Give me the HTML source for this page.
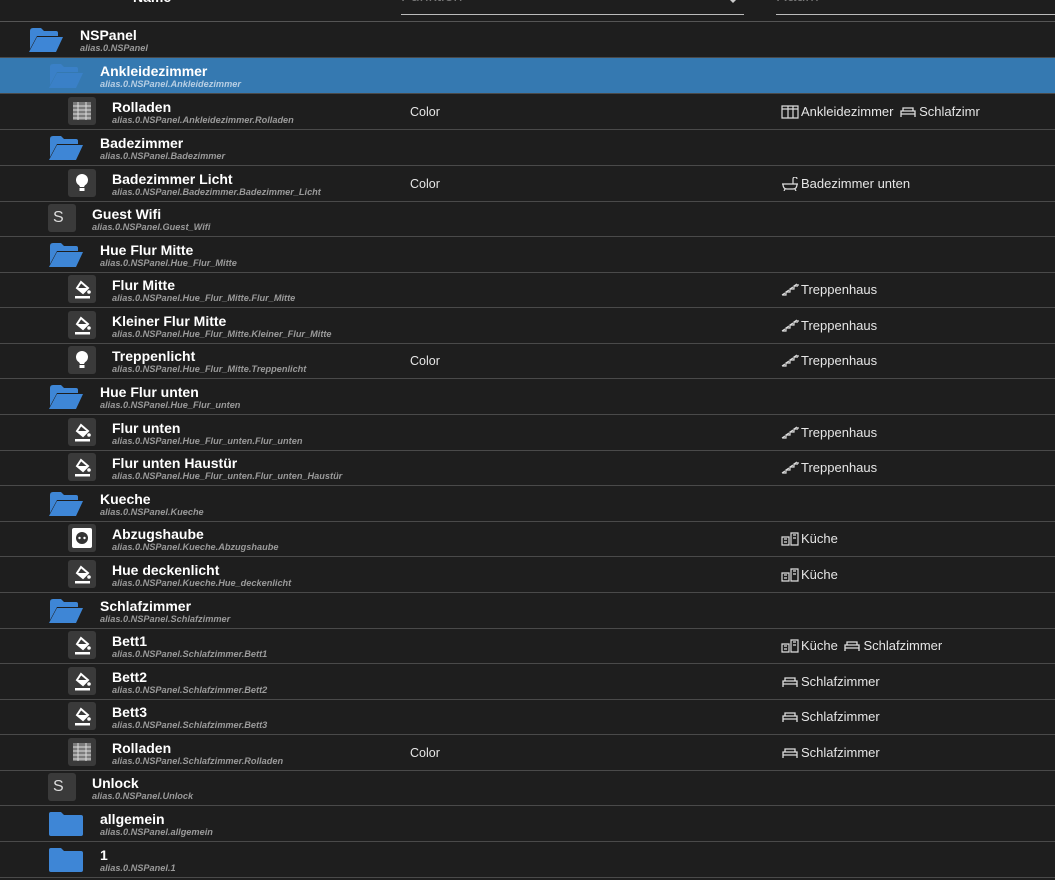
<!DOCTYPE html>
<html><head><meta charset="utf-8">
<style>
html,body{margin:0;padding:0;background:#1e1e1e;width:1055px;height:880px;overflow:hidden;font-family:"Liberation Sans",sans-serif;color:#fff}
.r{position:absolute;left:0;width:1055px;height:35px;border-bottom:1px solid #4a4a4a;box-sizing:content-box}
.sel{background:#3579b1}
.n{position:absolute;top:5px;font-size:14px;font-weight:bold;line-height:16px;white-space:nowrap}
.s{position:absolute;top:21px;font-size:9.2px;font-style:italic;font-weight:bold;color:#9a9a9a;line-height:11px;white-space:nowrap}
.sel .s{color:#b8cfe4}
.ib{position:absolute;top:3px;width:28px;height:28px;background:#3a3a3a;border-radius:3px}
.f{position:absolute;top:5px}
.c{position:absolute;left:410px;top:11px;font-size:12.5px;color:#e6e6e6}
.rm{position:absolute;left:781px;top:10px;font-size:13px;color:#e6e6e6;white-space:nowrap;display:flex;align-items:center;gap:2px}
.rm svg{vertical-align:middle}
.S{font-size:16px;color:#ddd;position:absolute;left:5px;top:5px;font-weight:normal}
</style></head><body>
<svg width="0" height="0" style="position:absolute">
<defs>
<symbol id="fo" viewBox="0 0 36 26"><path d="M2 4 Q2 1 5 1 H13 L16 4 H28 Q30 4 30 6 V9 H9 L2 22 Z" fill="#3e86d6"/><path d="M9 10 H35 L28 25 H1 Z" fill="#3e86d6"/></symbol>
<symbol id="fc" viewBox="0 0 36 26"><path d="M1 3 Q1 1 3 1 H13 L16 4 H33 Q35 4 35 6 V23 Q35 25 33 25 H3 Q1 25 1 23 Z" fill="#3e86d6"/></symbol>
<symbol id="pb" viewBox="0 0 28 28"><path d="M13 7 L20 13 L15 18 L9 13 Z" fill="none" stroke="#fff" stroke-width="2"/><path d="M9 13 L15 18 L20 13 Z" fill="#fff"/><circle cx="21" cy="17" r="1.8" fill="#fff"/><rect x="7" y="21" width="15" height="2.5" fill="#fff"/></symbol>
<symbol id="bl" viewBox="0 0 28 28"><circle cx="14" cy="11" r="6" fill="#fff"/><path d="M10 14 H18 L16 18 H12 Z" fill="#fff"/><rect x="11.5" y="19" width="5" height="3" fill="#fff"/></symbol>
<symbol id="sh" viewBox="0 0 28 28"><rect x="5" y="5" width="18" height="18" fill="#bbb" opacity=".5"/><path d="M5 9H23M5 13H23M5 17H23M5 21H23M10 5V23M18 5V23" stroke="#ddd" stroke-width="1"/></symbol>
<symbol id="so" viewBox="0 0 28 28"><rect x="4" y="4" width="20" height="20" rx="2" fill="#fff"/><circle cx="14" cy="14" r="6" fill="#333"/><circle cx="11.5" cy="14" r="1.2" fill="#fff"/><circle cx="16.5" cy="14" r="1.2" fill="#fff"/></symbol>
<symbol id="st" viewBox="0 0 18 14"><path d="M1 12 H5 V9 H9 V6 H13 V3 H17 M1 12 L4 10 M5 9 L8 7 M9 6 L12 4 M13 3 L16 1 M17 1 V3" fill="none" stroke="#ddd" stroke-width="1.2"/></symbol>
<symbol id="bd" viewBox="0 0 18 14"><path d="M2 12 V6 H16 V12 M2 9 H16 M4 6 V3 H14 V6" fill="none" stroke="#ddd" stroke-width="1.3"/></symbol>
<symbol id="wd" viewBox="0 0 18 14"><path d="M1 1 H17 V13 H1 Z M1 4 H17 M7 1 V13 M12 1 V13" fill="none" stroke="#ddd" stroke-width="1.2"/></symbol>
<symbol id="bt" viewBox="0 0 18 14"><path d="M1 7 H17 M2 7 Q2 12 6 12 H12 Q16 12 16 7 M4 12 L3 14 M14 12 L15 14 M12 7 V2 Q12 0 14 0 Q16 0 16 2" fill="none" stroke="#ddd" stroke-width="1.2"/></symbol>
<symbol id="kc" viewBox="0 0 18 14"><path d="M1 13 V5 H8 V13 Z M10 13 V1 H17 V13 Z M3 7 H6 M12 3 H15 M12 6 H15 M3 10 H6" fill="none" stroke="#ddd" stroke-width="1.2"/></symbol>
</defs></svg>

<div style="position:absolute;left:133px;top:-11px;font-size:14px;font-weight:bold">Name</div>
<div style="position:absolute;left:401px;top:-12px;font-size:16px;color:#777">Funktion</div>
<div style="position:absolute;left:401px;top:14px;width:343px;height:1px;background:#bbb"></div>
<div style="position:absolute;left:729px;top:-1px;width:0;height:0;border-left:4px solid transparent;border-right:4px solid transparent;border-top:4px solid #ccc"></div>
<div style="position:absolute;left:776px;top:-12px;font-size:16px;color:#777">Raum</div>
<div style="position:absolute;left:776px;top:14px;width:279px;height:1px;background:#bbb"></div>
<div style="position:absolute;left:0;top:21px;width:1055px;height:1px;background:#555"></div>

<div class="r" style="top:22px"><svg class="f" style="left:28px" width="36" height="26"><use href="#fo"/></svg><div class="n" style="left:80px">NSPanel</div><div class="s" style="left:80px">alias.0.NSPanel</div></div>
<div class="r sel" style="top:58px"><svg class="f" style="left:48px" width="36" height="26" opacity=".6"><use href="#fo"/></svg><div class="n" style="left:100px">Ankleidezimmer</div><div class="s" style="left:100px">alias.0.NSPanel.Ankleidezimmer</div></div>
<div class="r" style="top:94px"><div class="ib" style="left:68px"><svg width="28" height="28"><use href="#sh"/></svg></div><div class="n" style="left:112px">Rolladen</div><div class="s" style="left:112px">alias.0.NSPanel.Ankleidezimmer.Rolladen</div><div class="c">Color</div><div class="rm"><svg width="18" height="14"><use href="#wd"/></svg>Ankleidezimmer&nbsp;<svg width="18" height="14"><use href="#bd"/></svg>Schlafzimr</div></div>
<div class="r" style="top:130px"><svg class="f" style="left:48px" width="36" height="26"><use href="#fo"/></svg><div class="n" style="left:100px">Badezimmer</div><div class="s" style="left:100px">alias.0.NSPanel.Badezimmer</div></div>
<div class="r" style="top:166px"><div class="ib" style="left:68px"><svg width="28" height="28"><use href="#bl"/></svg></div><div class="n" style="left:112px">Badezimmer Licht</div><div class="s" style="left:112px">alias.0.NSPanel.Badezimmer.Badezimmer_Licht</div><div class="c">Color</div><div class="rm"><svg width="18" height="14"><use href="#bt"/></svg>Badezimmer unten</div></div>
<div class="r" style="top:201px"><div class="ib" style="left:48px"><span class="S">S</span></div><div class="n" style="left:92px">Guest Wifi</div><div class="s" style="left:92px">alias.0.NSPanel.Guest_Wifi</div></div>
<div class="r" style="top:237px"><svg class="f" style="left:48px" width="36" height="26"><use href="#fo"/></svg><div class="n" style="left:100px">Hue Flur Mitte</div><div class="s" style="left:100px">alias.0.NSPanel.Hue_Flur_Mitte</div></div>
<div class="r" style="top:272px"><div class="ib" style="left:68px"><svg width="28" height="28"><use href="#pb"/></svg></div><div class="n" style="left:112px">Flur Mitte</div><div class="s" style="left:112px">alias.0.NSPanel.Hue_Flur_Mitte.Flur_Mitte</div><div class="rm"><svg width="18" height="14"><use href="#st"/></svg>Treppenhaus</div></div>
<div class="r" style="top:308px"><div class="ib" style="left:68px"><svg width="28" height="28"><use href="#pb"/></svg></div><div class="n" style="left:112px">Kleiner Flur Mitte</div><div class="s" style="left:112px">alias.0.NSPanel.Hue_Flur_Mitte.Kleiner_Flur_Mitte</div><div class="rm"><svg width="18" height="14"><use href="#st"/></svg>Treppenhaus</div></div>
<div class="r" style="top:343px"><div class="ib" style="left:68px"><svg width="28" height="28"><use href="#bl"/></svg></div><div class="n" style="left:112px">Treppenlicht</div><div class="s" style="left:112px">alias.0.NSPanel.Hue_Flur_Mitte.Treppenlicht</div><div class="c">Color</div><div class="rm"><svg width="18" height="14"><use href="#st"/></svg>Treppenhaus</div></div>
<div class="r" style="top:379px"><svg class="f" style="left:48px" width="36" height="26"><use href="#fo"/></svg><div class="n" style="left:100px">Hue Flur unten</div><div class="s" style="left:100px">alias.0.NSPanel.Hue_Flur_unten</div></div>
<div class="r" style="top:415px"><div class="ib" style="left:68px"><svg width="28" height="28"><use href="#pb"/></svg></div><div class="n" style="left:112px">Flur unten</div><div class="s" style="left:112px">alias.0.NSPanel.Hue_Flur_unten.Flur_unten</div><div class="rm"><svg width="18" height="14"><use href="#st"/></svg>Treppenhaus</div></div>
<div class="r" style="top:450px"><div class="ib" style="left:68px"><svg width="28" height="28"><use href="#pb"/></svg></div><div class="n" style="left:112px">Flur unten Haustür</div><div class="s" style="left:112px">alias.0.NSPanel.Hue_Flur_unten.Flur_unten_Haustür</div><div class="rm"><svg width="18" height="14"><use href="#st"/></svg>Treppenhaus</div></div>
<div class="r" style="top:486px"><svg class="f" style="left:48px" width="36" height="26"><use href="#fo"/></svg><div class="n" style="left:100px">Kueche</div><div class="s" style="left:100px">alias.0.NSPanel.Kueche</div></div>
<div class="r" style="top:521px"><div class="ib" style="left:68px"><svg width="28" height="28"><use href="#so"/></svg></div><div class="n" style="left:112px">Abzugshaube</div><div class="s" style="left:112px">alias.0.NSPanel.Kueche.Abzugshaube</div><div class="rm"><svg width="18" height="14"><use href="#kc"/></svg>Küche</div></div>
<div class="r" style="top:557px"><div class="ib" style="left:68px"><svg width="28" height="28"><use href="#pb"/></svg></div><div class="n" style="left:112px">Hue deckenlicht</div><div class="s" style="left:112px">alias.0.NSPanel.Kueche.Hue_deckenlicht</div><div class="rm"><svg width="18" height="14"><use href="#kc"/></svg>Küche</div></div>
<div class="r" style="top:593px"><svg class="f" style="left:48px" width="36" height="26"><use href="#fo"/></svg><div class="n" style="left:100px">Schlafzimmer</div><div class="s" style="left:100px">alias.0.NSPanel.Schlafzimmer</div></div>
<div class="r" style="top:628px"><div class="ib" style="left:68px"><svg width="28" height="28"><use href="#pb"/></svg></div><div class="n" style="left:112px">Bett1</div><div class="s" style="left:112px">alias.0.NSPanel.Schlafzimmer.Bett1</div><div class="rm"><svg width="18" height="14"><use href="#kc"/></svg>Küche&nbsp;<svg width="18" height="14"><use href="#bd"/></svg>Schlafzimmer</div></div>
<div class="r" style="top:664px"><div class="ib" style="left:68px"><svg width="28" height="28"><use href="#pb"/></svg></div><div class="n" style="left:112px">Bett2</div><div class="s" style="left:112px">alias.0.NSPanel.Schlafzimmer.Bett2</div><div class="rm"><svg width="18" height="14"><use href="#bd"/></svg>Schlafzimmer</div></div>
<div class="r" style="top:699px"><div class="ib" style="left:68px"><svg width="28" height="28"><use href="#pb"/></svg></div><div class="n" style="left:112px">Bett3</div><div class="s" style="left:112px">alias.0.NSPanel.Schlafzimmer.Bett3</div><div class="rm"><svg width="18" height="14"><use href="#bd"/></svg>Schlafzimmer</div></div>
<div class="r" style="top:735px"><div class="ib" style="left:68px"><svg width="28" height="28"><use href="#sh"/></svg></div><div class="n" style="left:112px">Rolladen</div><div class="s" style="left:112px">alias.0.NSPanel.Schlafzimmer.Rolladen</div><div class="c">Color</div><div class="rm"><svg width="18" height="14"><use href="#bd"/></svg>Schlafzimmer</div></div>
<div class="r" style="top:770px"><div class="ib" style="left:48px"><span class="S">S</span></div><div class="n" style="left:92px">Unlock</div><div class="s" style="left:92px">alias.0.NSPanel.Unlock</div></div>
<div class="r" style="top:806px"><svg class="f" style="left:48px" width="36" height="26"><use href="#fc"/></svg><div class="n" style="left:100px">allgemein</div><div class="s" style="left:100px">alias.0.NSPanel.allgemein</div></div>
<div class="r" style="top:842px"><svg class="f" style="left:48px" width="36" height="26"><use href="#fc"/></svg><div class="n" style="left:100px">1</div><div class="s" style="left:100px">alias.0.NSPanel.1</div></div>
</body></html>
